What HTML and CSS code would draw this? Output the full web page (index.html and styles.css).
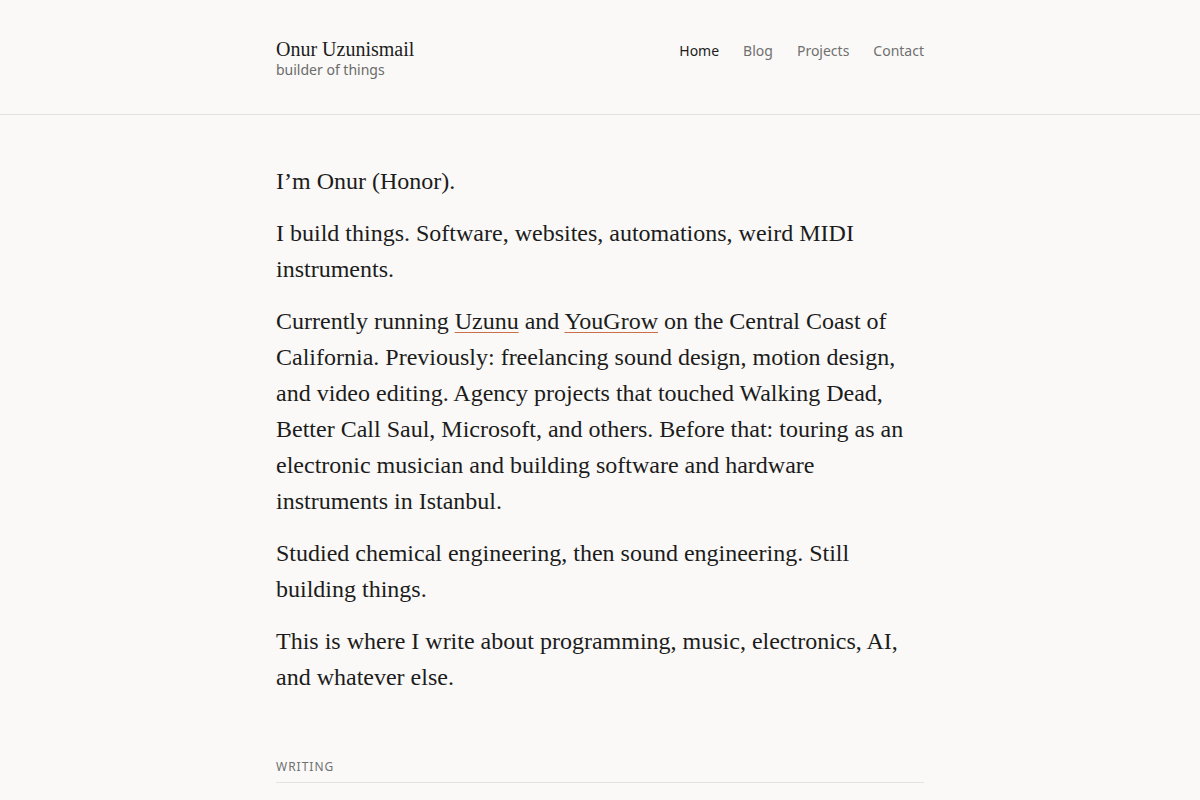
FILE: index.html
```html
<!DOCTYPE html>
<html lang="en">
<head>
<meta charset="UTF-8">
<title>Onur Uzunismail</title>
<link rel="stylesheet" href="styles.css">
</head>
<body>
<header class="site-header">
  <div class="wrap header-inner">
    <div class="brand">
      <a class="brand-name" href="#">Onur Uzunismail</a>
      <div class="brand-tag">builder of things</div>
    </div>
    <nav class="nav">
      <a class="active" href="#">Home</a>
      <a href="#">Blog</a>
      <a href="#">Projects</a>
      <a href="#">Contact</a>
    </nav>
  </div>
</header>

<main class="wrap intro">
  <p>I’m Onur (Honor).</p>
  <p>I build things. Software, websites, automations, weird MIDI instruments.</p>
  <p>Currently running <a href="#">Uzunu</a> and <a href="#">YouGrow</a> on the Central Coast of California. Previously: freelancing sound design, motion design, and video editing. Agency projects that touched Walking Dead, Better Call Saul, Microsoft, and others. Before that: touring as an electronic musician and building software and hardware instruments in Istanbul.</p>
  <p>Studied chemical engineering, then sound engineering. Still building things.</p>
  <p>This is where I write about programming, music, electronics, AI, and whatever else.</p>

  <section class="writing">
    <h2>Writing</h2>
  </section>
</main>
</body>
</html>
```

FILE: styles.css
```css
body {
  margin: 0;
  background: #faf9f7;
  color: #1c1c1c;
  font-family: "Liberation Serif", "Times New Roman", serif;
}
.wrap {
  width: 648px;
  margin: 0 auto;
}
.site-header {
  border-bottom: 1px solid #e3e2df;
}
.header-inner {
  display: flex;
  justify-content: space-between;
  align-items: flex-start;
  padding: 37px 0 36px;
}
.brand-name {
  display: block;
  font-size: 20px;
  line-height: 24px;
  color: #1c1c1c;
  text-decoration: none;
}
.brand-tag {
  font-family: "Noto Sans", sans-serif;
  font-size: 14px;
  line-height: 17px;
  color: #6b6b6b;
}
.nav {
  display: flex;
  gap: 24px;
  padding-top: 4px;
}
.nav a {
  font-family: "Noto Sans", sans-serif;
  font-size: 14px;
  line-height: 20px;
  color: #707070;
  text-decoration: none;
}
.nav a.active {
  color: #1c1c1c;
}
.intro {
  padding-top: 48px;
}
.intro p {
  font-size: 24px;
  line-height: 36px;
  margin: 0 0 16px;
}
.intro a {
  color: #1c1c1c;
  text-decoration: underline;
  text-decoration-color: #c8704a;
  text-underline-offset: 3px;
  text-decoration-thickness: 1px;
}
.writing {
  margin-top: 63px;
}
.writing h2 {
  font-family: "Noto Sans", sans-serif;
  font-size: 12px;
  font-weight: normal;
  letter-spacing: 1px;
  text-transform: uppercase;
  color: #707070;
  margin: 0;
  padding-bottom: 7px;
  border-bottom: 1px solid #e3e2df;
}
```
